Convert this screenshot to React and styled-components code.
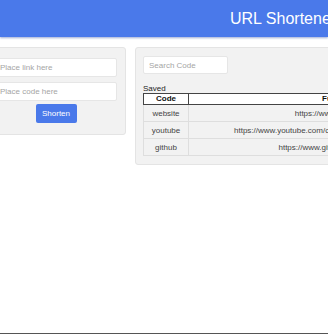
import styled, { createGlobalStyle } from "styled-components";

const GlobalStyle = createGlobalStyle`
  html, body {
    margin: 0;
    padding: 0;
    overflow: hidden;
    background: #fff;
    font-family: "Liberation Sans", Arial, sans-serif;
  }
`;

const Page = styled.div`
  height: 100vh;
  box-sizing: border-box;
  border-bottom: 1px solid #555;
  display: flex;
  flex-direction: column;
`;

const Header = styled.header`
  height: 37px;
  background: #4a79ea;
  box-shadow: 0 1px 2px rgba(40, 70, 160, 0.45);
  color: #fff;
  font-size: 16px;
  line-height: 38px;
  padding-left: 230px;
  white-space: nowrap;
  overflow: hidden;
`;

const Main = styled.main`
  display: flex;
  align-items: flex-start;
  gap: 9px;
  margin: 10px 0 0 -14px;
`;

const Panel = styled.section`
  flex: none;
  box-sizing: border-box;
  width: ${(props) => props.width}px;
  background: #f2f2f2;
  border: 1px solid #e4e4e4;
  border-radius: 3px;
  padding: ${(props) => props.pad};
  display: flex;
  flex-direction: column;
`;

const Input = styled.input`
  box-sizing: border-box;
  width: ${(props) => props.width || "100%"};
  height: ${(props) => props.h || 19}px;
  border: 1px solid #e6e6e6;
  border-radius: 2px;
  background: #fff;
  padding: 0 ${(props) => props.px || 5}px;
  font-family: inherit;
  font-size: 8px;
  outline: none;
  margin-bottom: ${(props) => props.mb || 0}px;
  &::placeholder {
    color: #a5a5a5;
  }
`;

const Button = styled.button`
  align-self: center;
  width: 41px;
  height: 19px;
  margin-top: 3px;
  border: none;
  border-radius: 2px;
  background: #4a79ea;
  color: #fff;
  font-family: inherit;
  font-size: 8px;
  padding: 0;
`;

const Label = styled.div`
  font-size: 8px;
  color: #222;
  margin-top: 10px;
  line-height: 9px;
`;

const Table = styled.table`
  border-collapse: collapse;
  font-size: 8px;
  table-layout: fixed;
  width: 346px;
`;

const Th = styled.th`
  height: 10px;
  padding: 0;
  border: 1px solid #444;
  background: #fff;
  color: #111;
  font-weight: bold;
  line-height: 10px;
  width: ${(props) => props.width || "auto"};
`;

const Td = styled.td`
  height: 16px;
  padding: 0;
  border: 1px solid #dedede;
  color: #444;
  text-align: center;
  white-space: nowrap;
  overflow: hidden;
`;

const links = [
  { code: "website", url: "https://www.website.com" },
  { code: "youtube", url: "https://www.youtube.com/channel/UCxxxxxxxxxxxxxxxxxxx" },
  { code: "github", url: "https://www.github.com/username" },
];

export default function App() {
  return (
    <>
      <GlobalStyle />
      <Page>
        <Header>URL Shortener</Header>
        <Main>
          <Panel width={140} pad="10px 8px 11px">
            <Input placeholder="Place link here" mb={5} px={4} />
            <Input placeholder="Place code here" px={4} />
            <Button>Shorten</Button>
          </Panel>
          <Panel width={400} pad="8px 7px 8px">
            <Input placeholder="Search Code" width="85px" h={18} />
            <Label>Saved</Label>
            <Table>
              <thead>
                <tr>
                  <Th width="44px">Code</Th>
                  <Th>Full Link</Th>
                </tr>
              </thead>
              <tbody>
                {links.map((link) => (
                  <tr key={link.code}>
                    <Td>{link.code}</Td>
                    <Td>{link.url}</Td>
                  </tr>
                ))}
              </tbody>
            </Table>
          </Panel>
        </Main>
      </Page>
    </>
  );
}
